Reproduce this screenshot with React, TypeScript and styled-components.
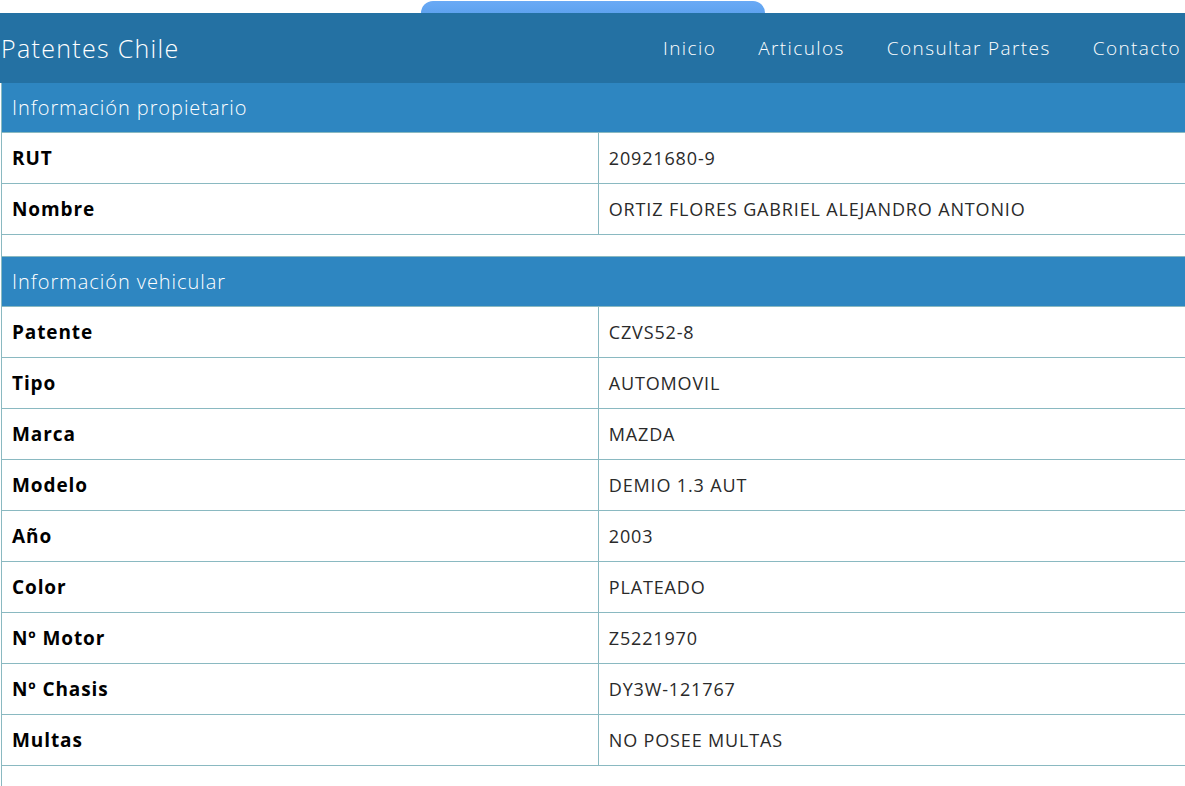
import React from 'react'
import styled, { createGlobalStyle } from 'styled-components'

const GlobalStyle = createGlobalStyle`
  html, body {
    margin: 0;
    padding: 0;
    background: #fff;
    overflow: hidden;
  }
  body {
    font-family: 'Open Sans', 'Noto Sans', sans-serif;
    color: #111;
  }
`

type Row = { label: string; value: string }

const propietario: Row[] = [
  { label: 'RUT', value: '20921680-9' },
  { label: 'Nombre', value: 'ORTIZ FLORES GABRIEL ALEJANDRO ANTONIO' },
]

const vehiculo: Row[] = [
  { label: 'Patente', value: 'CZVS52-8' },
  { label: 'Tipo', value: 'AUTOMOVIL' },
  { label: 'Marca', value: 'MAZDA' },
  { label: 'Modelo', value: 'DEMIO 1.3 AUT' },
  { label: 'Año', value: '2003' },
  { label: 'Color', value: 'PLATEADO' },
  { label: 'Nº Motor', value: 'Z5221970' },
  { label: 'Nº Chasis', value: 'DY3W-121767' },
  { label: 'Multas', value: 'NO POSEE MULTAS' },
]

const links = ['Inicio', 'Articulos', 'Consultar Partes', 'Contacto']

function Section({ title, rows }: { title: string; rows: Row[] }) {
  return (
    <>
      <tr>
        <HeadCell colSpan={2}>{title}</HeadCell>
      </tr>
      {rows.map(r => (
        <tr key={r.label}>
          <LabelCell>{r.label}</LabelCell>
          <ValueCell>{r.value}</ValueCell>
        </tr>
      ))}
      <tr>
        <SpacerCell colSpan={2} />
      </tr>
    </>
  )
}

export default function App() {
  return (
    <Page>
      <GlobalStyle />
      <TopStrip>
        <Tab />
      </TopStrip>
      <NavBar>
        <Brand>Patentes Chile</Brand>
        <NavLinks>
          {links.map(l => (
            <NavLink key={l}>{l}</NavLink>
          ))}
        </NavLinks>
      </NavBar>
      <Table>
        <tbody>
          <Section title="Información propietario" rows={propietario} />
          <Section title="Información vehicular" rows={vehiculo} />
        </tbody>
      </Table>
    </Page>
  )
}

const Page = styled.div`
  width: 1185px;
  height: 786px;
  overflow: hidden;
`

const TopStrip = styled.div`
  height: 13px;
  display: flex;
  justify-content: center;
  align-items: flex-end;
`

const Tab = styled.div`
  width: 344px;
  height: 12px;
  border-radius: 12px 12px 0 0;
  background: linear-gradient(#6aaaf5, #5ea2ef);
`

const NavBar = styled.nav`
  width: 1202px;
  height: 70px;
  background: #2471a3;
  display: flex;
  align-items: center;
  white-space: nowrap;
`

const Brand = styled.div`
  font-size: 25px;
  font-weight: 300;
  letter-spacing: 1.3px;
  color: #fff;
  padding-left: 1px;
  margin-right: auto;
`

const NavLinks = styled.div`
  display: flex;
`

const NavLink = styled.a`
  color: #fff;
  font-size: 19px;
  font-weight: 300;
  letter-spacing: 1.4px;
  padding: 0 21px;
`

const Table = styled.table`
  width: 1194px;
  margin-left: 1px;
  border-collapse: collapse;
  table-layout: fixed;
  border-left: 1px solid #8ab9c1;
`

const HeadCell = styled.td`
  height: 49px;
  background: #2e86c1;
  color: #fff;
  font-size: 20px;
  font-weight: 300;
  letter-spacing: 0.95px;
  padding: 0 10px;
  border-bottom: 1px solid #8ab9c1;
`

const LabelCell = styled.td`
  width: 50%;
  height: 50px;
  padding: 0 10px;
  font-size: 19px;
  font-weight: 700;
  letter-spacing: 0.9px;
  color: #000;
  border-right: 1px solid #8ab9c1;
  border-bottom: 1px solid #8ab9c1;
`

const ValueCell = styled.td`
  height: 50px;
  padding: 0 10px;
  font-size: 18px;
  font-weight: 400;
  letter-spacing: 0.85px;
  color: #2a2a2a;
  border-bottom: 1px solid #8ab9c1;
`

const SpacerCell = styled.td`
  height: 21px;
  padding: 0;
  border-bottom: 1px solid #8ab9c1;
`
